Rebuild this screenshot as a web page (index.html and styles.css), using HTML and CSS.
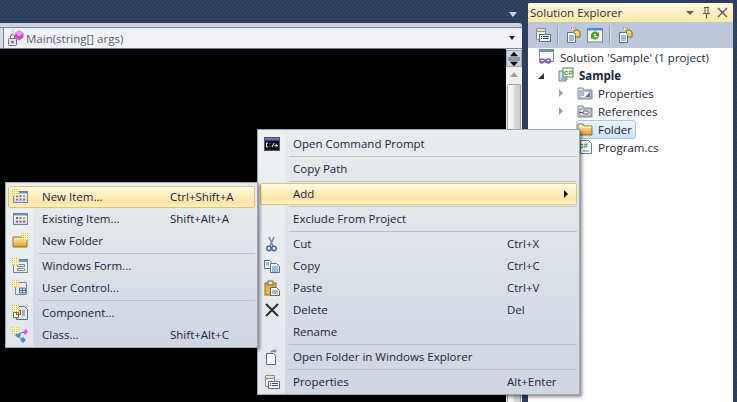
FILE: index.html
```html
<!DOCTYPE html>
<html lang="en">
<head>
<meta charset="utf-8">
<title>Solution Explorer</title>
<link rel="stylesheet" href="styles.css">
</head>
<body>
<svg class="defs" aria-hidden="true">
  <defs>
    <linearGradient id="fold" x1="0" y1="0" x2="0" y2="1"><stop offset="0" stop-color="#fff0b8"/><stop offset="1" stop-color="#d9a22c"/></linearGradient>
    <linearGradient id="pane" x1="0" y1="0" x2="0" y2="1"><stop offset="0" stop-color="#ffffff"/><stop offset="1" stop-color="#cfd8e6"/></linearGradient>
    <symbol id="spark" viewBox="0 0 16 16"><rect x="0" y="0" width="7" height="7" fill="#fff6b4"/><path d="M0 .5h7M0 2.500h7M0 4.500h7M0 6.500h7" stroke="#e8bf3a" stroke-dasharray="1 1"/><path d="M3 0h1v7H3z" fill="#fffbe0"/></symbol>
    <symbol id="sparkR" viewBox="0 0 16 16"><rect x="9" y="0" width="7" height="7" fill="#fff6b4"/><path d="M9 .5h7M9 2.500h7M9 4.500h7M9 6.500h7" stroke="#e8bf3a" stroke-dasharray="1 1"/></symbol>
    <symbol id="win" viewBox="0 0 16 16"><rect x="1.500" y="2.500" width="14" height="11" fill="url(#pane)" stroke="#76859c"/><rect x="2" y="3" width="13" height="1.500" fill="#5f93d3"/><path d="M4 6h2v2H4z" fill="#d6413a"/><path d="M7.500 6h2v2h-2z" fill="#3f9b3e"/><path d="M11 6h2v2h-2z" fill="#e39a24"/><path d="M4 9.500h2v2H4z" fill="#b04cc4"/><path d="M7.500 9.500h2v2h-2z" fill="#3f76c9"/><path d="M11 9.500h2v2h-2z" fill="#d6413a"/></symbol>
    <symbol id="props" viewBox="0 0 16 16"><path d="M1.500 1.500h9v3h-9z" fill="#f0e3b8" stroke="#8b8d90"/><path d="M1.500 4.500h9v8h-9z" fill="#f6f6f2" stroke="#8b8d90"/><rect x="4.500" y="7.500" width="11" height="7" fill="#fff" stroke="#56708f"/><path d="M6 9.500h1M8 9.500h6M6 11.500h1M8 11.500h6" stroke="#2e4a73"/></symbol>
    <symbol id="folder" viewBox="0 0 16 16"><path d="M1 3h5l1 2h8v9H1z" fill="url(#fold)" stroke="#8d6f2c"/><path d="M1.500 6h13" stroke="#fff6cf"/></symbol>
    <symbol id="showall" viewBox="0 0 16 16"><path d="M6 1h5l3 3v6" fill="#f5e9b8" stroke="#7d7a66" stroke-dasharray="1 1"/><path d="M9 3h4l2 2v5H9z" fill="#efcf73" stroke="#7a6a30"/><path d="M2.500 5.500h6l2 2v8h-8z" fill="#fff" stroke="#54709a"/><path d="M4 9h5M4 11h5M4 13h5" stroke="#4a78b5"/></symbol>
  </defs>
</svg>
<div class="app">
  <section class="doc-col">
    <div class="tabs"><span class="tab-arrow"></span></div>
    <div class="strip"></div>
    <div class="navbar">
      <div class="nav-left"></div>
      <div class="nav-combo">
        <svg class="ic" viewBox="0 0 18 18" width="18" height="18"><path d="M5 1h3M4 3h3M3 5h3" stroke="#c9c9c9"/><rect x="1.500" y="9.500" width="8" height="7" rx="1" fill="#dfe2e6" stroke="#6d6f73"/><path d="M3.500 9.500V7.500a2 2 0 0 1 4 0v2" fill="none" stroke="#6d6f73"/><circle cx="5.500" cy="13" r="1.200" fill="#555"/><path d="M12 1l4.500 3v4.500L12 11.500 8 8.500V4z" fill="#c94fc9"/><path d="M12 1l4.500 3L12 7 8 4z" fill="#ec9aec"/></svg>
        <span class="nav-text">Main(string[] args)</span>
        <span class="combo-arrow"></span>
      </div>
    </div>
    <div class="edit-row">
      <div class="code"></div>
      <div class="scroll">
        <div class="split"><svg viewBox="0 0 12 14" width="12" height="14"><path d="M6 0l3.500 4h-7zM0 6h12M0 8h12M6 14l-3.500-4h7z" fill="#111" stroke="#111" stroke-width=".6"/></svg></div>
        <div class="scroll-up"></div>
        <div class="thumb"></div>
      </div>
    </div>
  </section>

  <section class="explorer">
    <header class="ex-title">
      <span class="ex-name">Solution Explorer</span>
      <svg class="ex-tools" viewBox="0 0 44 14" width="44" height="14"><path d="M0 5h8l-4 4z" fill="#6a6250"/><path d="M18 1.500h5M19 1.500v6h3v-6M17 7.500h7M20.500 7.500v5" fill="none" stroke="#5d5646"/><path d="M32 2l9 9M41 2l-9 9" stroke="#6a6250" stroke-width="1.500"/></svg>
    </header>
    <div class="ex-bar">
      <svg class="tb" width="16" height="16"><use href="#props"/></svg>
      <i class="tb-sep"></i>
      <svg class="tb" width="16" height="16"><use href="#showall"/></svg>
      <span class="tb-on"><svg viewBox="0 0 16 16" width="16" height="16"><rect x=".5" y="1.500" width="15" height="13.500" fill="#f8f4dc" stroke="#6f88ad"/><rect x="1" y="1" width="14" height="2.500" fill="#4d88d8"/><path d="M4 8a4 4 0 0 1 7-2l1-1v4H8l1.500-1.500A2.500 2.500 0 0 0 5.500 8.500zM12 9a4 4 0 0 1-7 2l-1 1V8h4l-1.500 1.500a2.500 2.500 0 0 0 4 0z" fill="#3f9b2e"/></svg></span>
      <i class="tb-sep"></i>
      <svg class="tb" width="16" height="16"><use href="#showall"/></svg>
    </div>
    <ul class="tree">
      <li class="node lvl0">
        <svg class="ic" viewBox="0 0 16 16" width="16" height="16"><rect x=".5" y=".5" width="14" height="12" fill="#fff" stroke="#7a8aa3"/><rect x="1" y="1" width="13" height="2" fill="#5f93d3"/><path d="M6 11.500c-1-1.200-2-1.500-3-1.500a2 2 0 0 0 0 4c2 0 4-4 6.500-4a2 2 0 0 1 0 4c-1 0-2-.5-3-1.500" fill="none" stroke="#7b4fc0" stroke-width="1.400"/></svg>
        <span>Solution 'Sample' (1 project)</span>
      </li>
      <li class="node lvl1">
        <i class="exp-open"></i>
        <svg class="ic" viewBox="0 0 16 16" width="16" height="16"><path d="M1 4h6l1 2v8H1z" fill="#cfe0f2" stroke="#6783a8"/><path d="M3 12h7" stroke="#6783a8"/><rect x="5" y="1" width="10" height="9" fill="#fff" stroke="#4b8a3b"/><text class="cs" x="5.800" y="8">c#</text></svg>
        <strong>Sample</strong>
      </li>
      <li class="node lvl2">
        <i class="exp-closed"></i>
        <svg class="ic" viewBox="0 0 16 16" width="16" height="16"><path d="M1 3h5l1 2h8v9H1z" fill="#dfe5ee" stroke="#7b8796"/><rect x="3" y="6" width="11" height="7" fill="#fff" stroke="#7b8796"/><path d="M4 8h3M4 10h3" stroke="#3f76c9"/><path d="M13 7v5H8z" fill="#3f76c9"/></svg>
        <span>Properties</span>
      </li>
      <li class="node lvl2">
        <i class="exp-closed"></i>
        <svg class="ic" viewBox="0 0 16 16" width="16" height="16"><path d="M1 3h5l1 2h8v9H1z" fill="#dfe1e4" stroke="#7b8796"/><rect x="3" y="6" width="11" height="7" fill="#eef0f2" stroke="#7b8796"/><path d="M2 9.500h4" stroke="#555"/><rect x="6" y="8" width="6" height="3" rx="1" fill="#fff" stroke="#555"/></svg>
        <span>References</span>
      </li>
      <li class="node lvl2 selected">
        <i class="exp-none"></i>
        <svg class="ic" width="16" height="16"><use href="#folder"/></svg>
        <span class="sel-label">Folder</span>
      </li>
      <li class="node lvl2">
        <i class="exp-none"></i>
        <svg class="ic" viewBox="0 0 16 16" width="16" height="16"><path d="M3.500 1.500h8l3 3v10h-11z" fill="#fff" stroke="#6d7c92"/><path d="M6 12h6" stroke="#6d7c92"/><text class="cs" x="2" y="9">c#</text></svg>
        <span>Program.cs</span>
      </li>
    </ul>
  </section>

  <nav class="menu menu-main">
    <div class="item"><svg class="mi" viewBox="0 0 16 16" width="16" height="16"><rect x=".5" y="1.500" width="15" height="13" fill="#111" stroke="#555"/><rect x="1" y="2" width="14" height="2.500" fill="#5a7bd0"/><path d="M4 7H2.500v4H4M6 7.500v.5M6 10v.5M8 11l2-4" stroke="#eee" fill="none"/><path d="M10.500 9.500h3.500M12.200 7.800v3.500" stroke="#eee"/></svg><span class="lb">Open Command Prompt</span></div>
    <div class="sep"></div>
    <div class="item"><span class="mi"></span><span class="lb">Copy Path</span></div>
    <div class="sep"></div>
    <div class="item hot"><span class="mi"></span><span class="lb">Add</span><i class="sub-arrow"></i></div>
    <div class="sep"></div>
    <div class="item"><span class="mi"></span><span class="lb">Exclude From Project</span></div>
    <div class="sep"></div>
    <div class="item"><svg class="mi" viewBox="0 0 16 16" width="16" height="16"><path d="M5 1l4 9M10 1L6 10" stroke="#7b8290" stroke-width="1.400"/><circle cx="5" cy="12.500" r="2.200" fill="none" stroke="#3f63a8" stroke-width="1.500"/><circle cx="10" cy="12.500" r="2.200" fill="none" stroke="#3f63a8" stroke-width="1.500"/></svg><span class="lb">Cut</span><span class="sc">Ctrl+X</span></div>
    <div class="item"><svg class="mi" viewBox="0 0 16 16" width="16" height="16"><path d="M.5 2.500h5l2 2v6h-7z" fill="#fff" stroke="#54709a"/><path d="M6.500 5.500h6l3 3v6h-9z" fill="#fff" stroke="#54709a"/><path d="M8 9h6M8 11h6M8 13h6M2 5h3M2 7h3" stroke="#4a78b5"/></svg><span class="lb">Copy</span><span class="sc">Ctrl+C</span></div>
    <div class="item"><svg class="mi" viewBox="0 0 16 16" width="16" height="16"><rect x="1" y="3" width="11" height="12" fill="#e8b545" stroke="#8d6f2c"/><rect x="4" y="1" width="5" height="4" fill="#e9e2c6" stroke="#6c6a5c"/><path d="M6.500 7.500h6l3 3v5h-9z" fill="#fff" stroke="#5c6a7e"/><path d="M8 11h6M8 13h6" stroke="#5c6a7e"/></svg><span class="lb">Paste</span><span class="sc">Ctrl+V</span></div>
    <div class="item"><svg class="mi" viewBox="0 0 16 16" width="16" height="16"><path d="M2 2l12 12M14 2L2 14" stroke="#2b2b2b" stroke-width="2"/></svg><span class="lb">Delete</span><span class="sc">Del</span></div>
    <div class="item"><span class="mi"></span><span class="lb">Rename</span></div>
    <div class="sep"></div>
    <div class="item"><svg class="mi" viewBox="0 0 16 16" width="16" height="16"><path d="M2.500 4.500h7l2 2v9h-9z" fill="#fff" stroke="#5c6a7e"/><path d="M6 4C6 2 8 1 10 1V0l3 2-3 2V3C8 3 7 3 6 4z" fill="#7a8aa3"/></svg><span class="lb">Open Folder in Windows Explorer</span></div>
    <div class="sep"></div>
    <div class="item"><svg class="mi" width="16" height="16"><use href="#props"/></svg><span class="lb">Properties</span><span class="sc">Alt+Enter</span></div>
  </nav>

  <nav class="menu menu-sub">
    <div class="item hot"><svg class="mi" width="16" height="16"><use href="#win"/><use href="#spark"/></svg><span class="lb">New Item...</span><span class="sc">Ctrl+Shift+A</span></div>
    <div class="item"><svg class="mi" width="16" height="16"><use href="#win"/></svg><span class="lb">Existing Item...</span><span class="sc">Shift+Alt+A</span></div>
    <div class="item"><svg class="mi" viewBox="0 0 16 16" width="16" height="16"><path d="M1 4h9l1 2h4v8H1z" fill="url(#fold)" stroke="#8d6f2c"/><use href="#sparkR"/></svg><span class="lb">New Folder</span></div>
    <div class="sep"></div>
    <div class="item"><svg class="mi" viewBox="0 0 16 16" width="16" height="16"><rect x="1.500" y="1.500" width="14" height="13" fill="#eef1f5" stroke="#76859c"/><rect x="6" y="2" width="9" height="2" fill="#5f93d3"/><path d="M5.500 6.500h7v2h-7zM5.500 10.500h7v2h-7z" fill="#fff" stroke="#76859c"/><use href="#spark"/></svg><span class="lb">Windows Form...</span></div>
    <div class="item"><svg class="mi" viewBox="0 0 16 16" width="16" height="16"><path d="M3.500 2.500h11v12h-11z" fill="#eef1f5" stroke="#76859c"/><path d="M7.500 8h6v5h-6zM10.500 8v5M7.500 10.500h6" fill="#dbe3ee" stroke="#56708f"/><use href="#spark"/></svg><span class="lb">User Control...</span></div>
    <div class="sep"></div>
    <div class="item"><svg class="mi" viewBox="0 0 16 16" width="16" height="16"><path d="M4.500 1.500h8l3 3v10h-11z" fill="#e9edf3" stroke="#5c6a7e"/><path d="M10 6h3M10 8h3M10 10h3" stroke="#5c6a7e"/><rect x="1.500" y="7.500" width="5" height="5" fill="#fff" stroke="#3f9b3e"/><rect x="4.500" y="5.500" width="4" height="4" fill="none" stroke="#c33a32"/><use href="#spark"/></svg><span class="lb">Component...</span></div>
    <div class="item"><svg class="mi" viewBox="0 0 16 16" width="16" height="16"><path d="M5 7l5 6M6 7l6-2" stroke="#5c6a7e"/><path d="M3 8l3-3 3 3-3 3z" fill="#4a88d8"/><path d="M11 5l3-3 2 3-3 3z" fill="#d75ad7"/><path d="M8 13l3-3 3 3-3 3z" fill="#4a88d8"/><use href="#spark"/></svg><span class="lb">Class...</span><span class="sc">Shift+Alt+C</span></div>
  </nav>
</div>
</body>
</html>
```
FILE: styles.css
```css
* { box-sizing: border-box; }
html, body { margin: 0; height: 100%; }
body {
  font-family: "Open Sans", "Noto Sans", sans-serif;
  font-size: 11.500px;
  color: #1c2340;
  overflow: hidden;
}
.defs { display: block; width: 0; height: 0; }
.cs { font-family: "Liberation Sans", sans-serif; font-size: 8px; font-weight: 700; fill: #2f8a2e; }

.app {
  position: relative;
  display: flex;
  gap: 6px;
  width: 737px;
  height: 402px;
  padding-right: 4px;
  background: repeating-conic-gradient(#2b3d5a 0 25%, #30435f 0 50%) 0 0 / 4px 4px;
}

/* document column */
.doc-col { display: flex; flex-direction: column; width: 522px; }
.tabs { position: relative; height: 23px; flex: none; }
.tab-arrow {
  position: absolute; right: 5px; top: 12px;
  border: 4px solid transparent; border-top: 5px solid #ced4df; border-bottom: 0;
}
.strip { height: 4px; flex: none; background: #ced4df; border-top-right-radius: 3px; }
.navbar {
  display: flex; height: 22px; flex: none;
  background: #f0f2f8;
  border-top: 1px solid #74849c;
  border-bottom: 1px solid #74849c;
}
.nav-left { width: 4px; background: #d6dbe4; border-right: 1px solid #74849c; }
.nav-combo { display: flex; flex: 1; align-items: center; padding: 0 4px 0 3px; color: #5a5a6e; }
.nav-combo .ic { margin-right: 1px; margin-top: -1px; }
.nav-text { flex: 1; }
.combo-arrow { border: 3.500px solid transparent; border-top: 4px solid #222; border-bottom: 0; margin-right: 3px; }

.edit-row { display: flex; flex: 1; min-height: 0; }
.code { flex: 1; background: #000; }
.scroll { display: flex; flex-direction: column; width: 16px; background: #f0f0f0; }
.split {
  display: flex; align-items: center; justify-content: center;
  height: 17px; margin-top: 1px; flex: none;
  background: #ccd5e2; border: 1px solid #9aa8bb;
}
.scroll-up { width: 0; height: 0; margin: 5px auto 0; border: 4px solid transparent; border-bottom: 5px solid #a3a3a3; border-top: 0; flex: none; }
.thumb {
  flex: 1; margin: 7px 1px 0;
  background: linear-gradient(to right, #f8f8f8 0, #f2f2f2 35%, #d6d6d6 60%, #cfcfcf 100%);
  border: 1px solid #a2a2a2; border-bottom: 0; border-radius: 2px 2px 0 0;
}

/* solution explorer */
.explorer { display: flex; flex-direction: column; width: 205px; margin-top: 3px; background: #fff; border-radius: 2px 2px 0 0; overflow: hidden; }
.ex-title {
  display: flex; align-items: center; justify-content: space-between;
  height: 19px; flex: none; padding: 0 1px 0 2px;
  background: linear-gradient(#fff9e6, #fde6a6);
  color: #2f2f2f;
}
.ex-tools { margin-right: 2px; }
.ex-bar { display: flex; align-items: center; gap: 0; height: 26px; flex: none; padding-left: 7px; background: #bcc7d8; }
.tb { flex: none; }
.tb-sep { width: 1px; height: 18px; margin: 0 6px; background: #93a0b4; border-right: 1px solid #d6dde8; box-sizing: content-box; }
.tb-on { display: flex; align-items: center; justify-content: center; width: 16px; height: 16px; margin-left: 6px; }
.tree { list-style: none; margin: 0; padding: 0; flex: 1; }
.node { display: flex; align-items: center; height: 18px; white-space: nowrap; }
.node .ic { flex: none; margin-right: 5px; }
.lvl0 { padding-left: 11px; }
.lvl1 { padding-left: 10px; }
.lvl2 { padding-left: 31px; }
.exp-open { width: 0; height: 0; margin-right: 14px; border-style: solid; border-width: 0 0 6px 6px; border-color: transparent transparent #333 transparent; margin-top: 2px; }
.exp-closed { width: 0; height: 0; margin-right: 14px; border-style: solid; border-width: 4px 0 4px 4px; border-color: transparent transparent transparent #a0a0a0; }
.exp-none { width: 4px; margin-right: 14px; flex: none; }
.selected { position: relative; }
.selected::before {
  content: ""; position: absolute; left: 48px; top: 0; width: 58px; height: 17px;
  background: linear-gradient(#ecf5fc, #cde3f6); border: 1px solid #a5c7ea; border-radius: 3px;
}
.selected .ic, .selected .sel-label { position: relative; }

/* menus */
.menu {
  position: absolute;
  padding: 3px 2px;
  border: 1px solid #9aa6b7;
  background:
    linear-gradient(to right, rgba(242, 244, 246, .55) 0, rgba(242, 244, 246, .55) 27px, transparent 27px),
    linear-gradient(#e9ecee, #ced6e2);
  box-shadow: 2px 2px 3px rgba(0, 0, 0, .45);
}
.menu-main { left: 257px; top: 129px; width: 323px; height: 266px; }
.menu-sub { left: 5px; top: 182px; width: 253px; height: 166px; }
.item {
  display: grid; align-items: center;
  height: 22px;
  border: 1px solid transparent;
  border-radius: 2px;
  white-space: nowrap;
}
.menu-main .item { grid-template-columns: 32px 214px 1fr; }
.menu-sub .item { grid-template-columns: 33px 128px 1fr; }
.item.hot {
  background: linear-gradient(#fffbee 0, #fff0c2 35%, #fee5a6 75%, #fdf0c6 100%);
  border-color: #e5c365;
}
.lb, .sc { position: relative; top: -1px; }
.mi { display: block; width: 16px; height: 16px; margin-left: 3px; }
.sep { height: 3px; margin-left: 29px; background: linear-gradient(transparent 1px, #bcc1ca 1px, #bcc1ca 2px, transparent 2px); }
.menu-sub .sep { margin-left: 30px; }
.sub-arrow {
  grid-column: 3; justify-self: end; margin-right: 8px;
  border-style: solid; border-width: 4px 0 4px 4px; border-color: transparent transparent transparent #111;
}
```
